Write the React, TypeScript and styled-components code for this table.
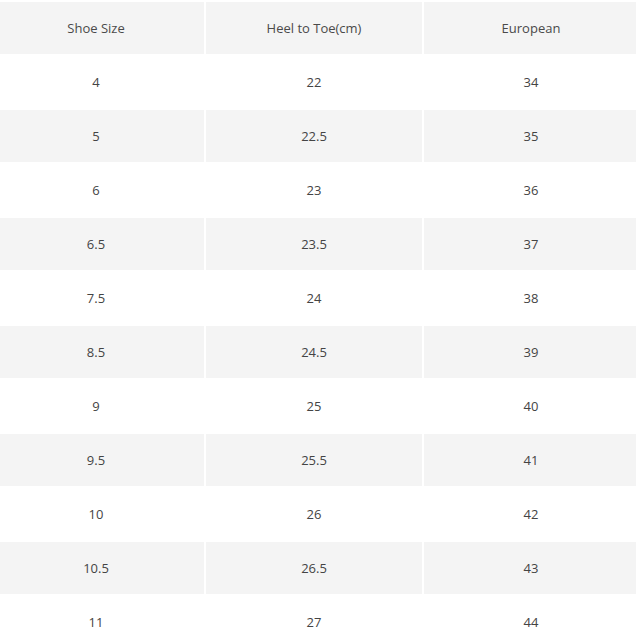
import React from "react";
import styled, { createGlobalStyle } from "styled-components";

const Global = createGlobalStyle`
  html, body { margin: 0; padding: 0; background: #fff; overflow: hidden; }
  body { font-family: "Open Sans", "Noto Sans", sans-serif; }
`;

const Table = styled.table`
  table-layout: fixed;
  border-collapse: separate;
  border-spacing: 2px;
  margin-left: -14px;
  width: 654px;
  font-size: 13px;
  color: #444;
`;

const Row = styled.tr<{ $shade: boolean }>`
  background: ${(p) => (p.$shade ? "#f4f4f4" : "#fff")};
`;

const HeadCell = styled.th`
  height: 52px;
  padding: 0;
  font-weight: 400;
  color: #4a4a4a;
  text-align: center;
  vertical-align: middle;
`;

const Cell = styled.td`
  height: 52px;
  padding: 0;
  text-align: center;
  vertical-align: middle;
`;

const rows: [string, string, string][] = [
  ["4", "22", "34"],
  ["5", "22.5", "35"],
  ["6", "23", "36"],
  ["6.5", "23.5", "37"],
  ["7.5", "24", "38"],
  ["8.5", "24.5", "39"],
  ["9", "25", "40"],
  ["9.5", "25.5", "41"],
  ["10", "26", "42"],
  ["10.5", "26.5", "43"],
  ["11", "27", "44"],
];

export default function App() {
  return (
    <>
      <Global />
      <Table>
        <colgroup>
          <col style={{ width: 216 }} />
          <col style={{ width: 216 }} />
          <col style={{ width: 214 }} />
        </colgroup>
        <thead>
          <Row $shade>
            <HeadCell>Shoe Size</HeadCell>
            <HeadCell>Heel to Toe(cm)</HeadCell>
            <HeadCell>European</HeadCell>
          </Row>
        </thead>
        <tbody>
          {rows.map((r, i) => (
            <Row key={i} $shade={i % 2 === 1}>
              {r.map((c, j) => (
                <Cell key={j}>{c}</Cell>
              ))}
            </Row>
          ))}
        </tbody>
      </Table>
    </>
  );
}
